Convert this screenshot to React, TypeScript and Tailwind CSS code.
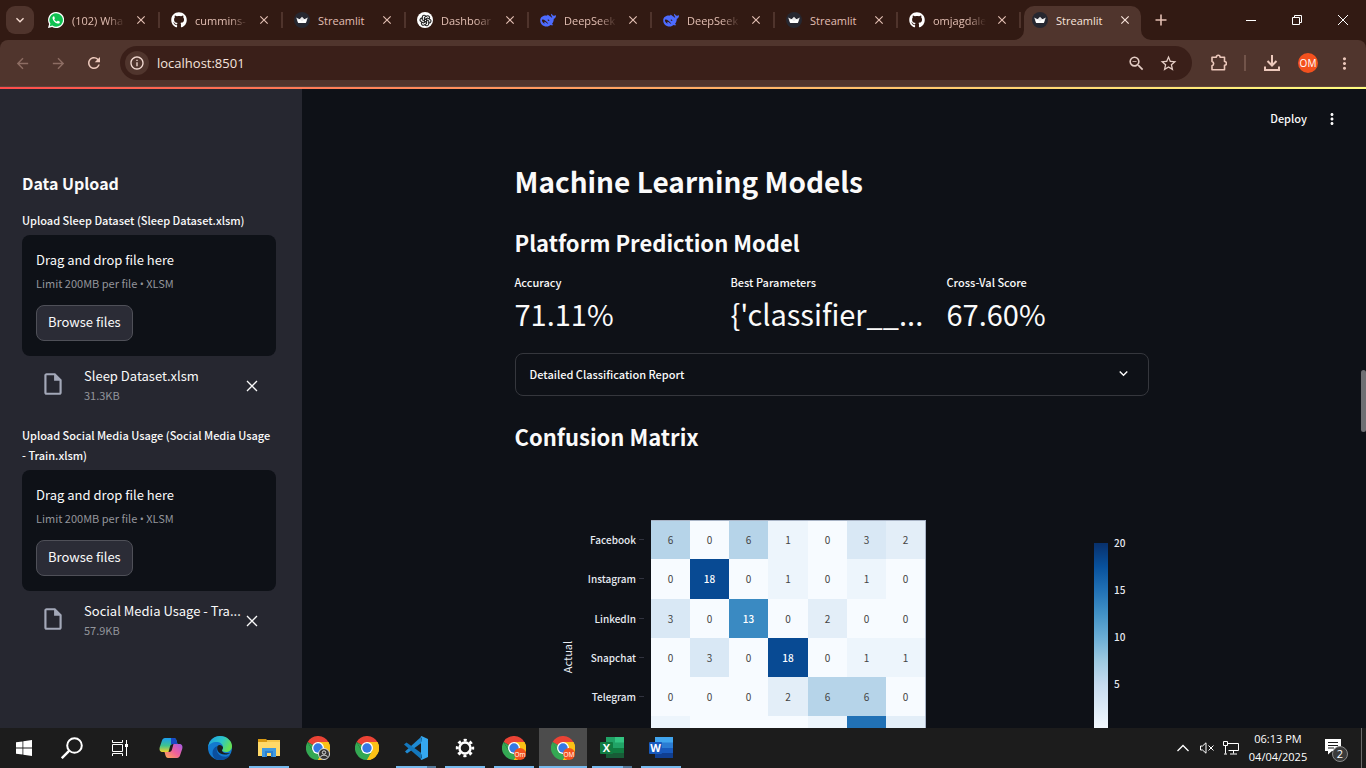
import React from "react";
import { FaGithub } from "react-icons/fa";
import { TbBrandOpenai } from "react-icons/tb";
import {
  MdArrowBack,
  MdArrowForward,
  MdClose,
  MdInfoOutline,
  MdKeyboardArrowDown,
  MdMoreVert,
  MdOutlineInsertDriveFile,
  MdRefresh,
  MdStarOutline,
  MdZoomOut,
} from "react-icons/md";

const WhatsAppIcon = () => (
  <svg viewBox="0 0 16 16" className="size-4">
    <path d="M8 0a8 8 0 0 0-6.9 12L0 16l4.1-1.1A8 8 0 1 0 8 0z" fill="#fff" />
    <path d="M8 1.3a6.7 6.7 0 0 0-5.6 10.3l-.6 2.6 2.6-.7A6.7 6.7 0 1 0 8 1.300z" fill="#10c152" />
    <path
      d="M5.600 4.200c-.9.4-1.200 1.300-1 2.200.5 2.400 2.600 4.500 5 5.100.9.2 1.900-.1 2.200-1.100.1-.5 0-.7-.3-.9l-1.400-.7c-.3-.1-.5 0-.7.200l-.6.7C7.500 9.200 6.700 8.400 6.200 7.300l.6-.7c.1-.2.1-.4 0-.6l-.6-1.500c-.1-.3-.3-.4-.6-.3z"
      fill="#fff"
    />
  </svg>
);

const CrownIcon = () => (
  <svg viewBox="0 0 16 16" className="size-4">
    <circle cx="8" cy="8" r="8" fill="#262730" />
    <path d="M2.200 5.600 5.600 7.200 8 4.700l2.400 2.500 3.400-1.600-1.700 4.900c-.1.300-.3.500-.6.500h-7c-.3 0-.5-.2-.6-.5z" fill="#e8e8ea" />
    <path d="M3.600 8.300 5.600 7.200 8 9.500l2.400-2.300 2 1.100-.5 2.200c-.1.300-.3.500-.6.500H4.700c-.3 0-.5-.2-.6-.5z" fill="#fff" />
  </svg>
);

const WhaleIcon = () => (
  <svg viewBox="0 0 16 16" className="size-4" fill="#4d6bfe">
    <path
      fillRule="evenodd"
      d="M15.700 3.200c-.4-.2-.8.400-1.500.5-.9.100-1.500-.2-1.900-.9-.2-.4-.5-.9-.9-1-.3 0-.3.400-.3.900 0 .9.400 1.500.9 2 .3.300.2.700 0 1-.3-.2-1.200-.7-1.700-1.100C9.400 3.700 8.500 2.900 7.400 2.700c-.4 0-.5.300-.2.600.2.200.2.400-.1.400C3.900 3.200.3 4.700.2 8.300c-.1 3.300 2.600 6.300 6.500 6.300 1.700 0 2.900-.6 3.900-1.500.8.300 2.300.4 2.600 0 .2-.4-.9-.9-1.200-1.100 1.300-1.600 1.700-3.300 1.800-5.200 1.100-.4 2.200-1.500 2.200-3.100 0-.2-.1-.4-.3-.5zM7.900 11.800C6 10.300 5 9.600 4.600 9.700c-.6 0-.3.800-.1 1.300.2.400.1.700-.4.500C2.800 10.900 1.900 9.200 1.900 8c0-.4.200-.6.500-.6 2.500.1 3.600 1.600 5.600 3.900.3.300.2.600-.1.500zM9 9c-.8-.1-1.300-.5-1.300-1 0-.4.300-.5.700-.4.600.1 1 .6 1 1 0 .3-.2.400-.4.400z"
    />
  </svg>
);

const OpenAIIcon = () => (
  <span className="flex size-4 items-center justify-center rounded-full bg-white text-[#222]">
    <TbBrandOpenai size={13} />
  </span>
);

const GithubIcon = () => <FaGithub size={16} color="#fff" />;

const tabs = [
  { title: "(102) Wha", icon: WhatsAppIcon },
  { title: "cummins-", icon: GithubIcon },
  { title: "Streamlit", icon: CrownIcon },
  { title: "Dashboar", icon: OpenAIIcon },
  { title: "DeepSeek", icon: WhaleIcon },
  { title: "DeepSeek", icon: WhaleIcon },
  { title: "Streamlit", icon: CrownIcon },
  { title: "omjagdale", icon: GithubIcon },
  { title: "Streamlit", icon: CrownIcon, active: true },
];

function Tab({ title, icon: Icon, active }: { title: string; icon: React.FC; active?: boolean }) {
  return (
    <div className={active ? "w-[123px] shrink px-[3px]" : "w-[123px] shrink"}>
      <div
        className={
          active
            ? "relative flex h-[34px] items-center rounded-t-[10px] bg-[#50352d] pr-2 pb-[6px] pl-2 text-[#f9e4dc]"
            : "flex h-[34px] items-center pl-[11px] pb-[6px] text-[#e3bfb3]"
        }
      >
        {active && (
          <>
            <svg viewBox="0 0 10 10" className="absolute bottom-0 -left-[10px] size-[10px]" fill="#50352d">
              <path d="M10 0v10H0A10 10 0 0 0 10 0z" />
            </svg>
            <svg viewBox="0 0 10 10" className="absolute -right-[10px] bottom-0 size-[10px]" fill="#50352d">
              <path d="M0 0v10h10A10 10 0 0 1 0 0z" />
            </svg>
          </>
        )}
        <span className="shrink-0">
          <Icon />
        </span>
        <span
          data-full={title === "Streamlit"}
          className="ml-2 min-w-0 flex-1 overflow-hidden [mask-image:linear-gradient(90deg,#000_65%,transparent)] pt-px text-[11px] leading-4 whitespace-nowrap data-[full=true]:[mask-image:none]"
        >
          {title}
        </span>
        <button aria-label={"Close " + title} className="ml-2 flex size-4 shrink-0 items-center justify-center">
          <MdClose size={14} />
        </button>
        {!active && <span className="ml-[9px] h-4 w-[2px] shrink-0 bg-[#4f342c]" />}
      </div>
    </div>
  );
}

function TabStrip() {
  return (
    <div className="flex h-10 items-start bg-[#321a13] pt-[6px] pl-[6px]">
      <button aria-label="Search tabs" className="flex size-7 shrink-0 items-center justify-center rounded-[9px] bg-[#4f342c] text-[#f6dcd2]">
        <MdKeyboardArrowDown size={16} />
      </button>
      <div className="ml-[3px] flex min-w-0">
        {tabs.map((t, i) => (
          <Tab key={i} {...t} />
        ))}
      </div>
      <button aria-label="New tab" className="ml-[3px] flex size-7 shrink-0 items-center justify-center text-[#e3bfb3]">
        <svg viewBox="0 0 12 12" className="size-3" stroke="currentColor" strokeWidth="1.600">
          <path d="M6 .5v11M.5 6h11" />
        </svg>
      </button>
      <div className="ml-auto flex h-7 text-white">
        <button aria-label="Minimize" className="flex w-[46px] items-center justify-center">
          <svg viewBox="0 0 10 10" className="size-[10px]" stroke="currentColor">
            <path d="M0 5.500h10" />
          </svg>
        </button>
        <button aria-label="Restore" className="flex w-[46px] items-center justify-center">
          <svg viewBox="0 0 10 10" className="size-[10px]" stroke="currentColor" fill="none">
            <path d="M.5 2.500h7v7h-7zM2.500 2.500v-2h7v7h-2" />
          </svg>
        </button>
        <button aria-label="Close window" className="flex w-[46px] items-center justify-center">
          <svg viewBox="0 0 10 10" className="size-[10px]" stroke="currentColor">
            <path d="M0 0l10 10M10 0L0 10" />
          </svg>
        </button>
      </div>
    </div>
  );
}

function Toolbar() {
  const btn = "flex h-8 w-9 shrink-0 items-center justify-center";
  return (
    <div className="bg-[#321a13]">
      <div className="flex h-[47px] items-center rounded-t-lg border-b border-[#5d433b] bg-[#50352d] px-1 text-[#ecc8bb]">
        <button aria-label="Back" className={btn + " text-[#8d6d63]"}>
          <MdArrowBack size={17} />
        </button>
        <button aria-label="Forward" className={btn + " text-[#8d6d63]"}>
          <MdArrowForward size={17} />
        </button>
        <button aria-label="Reload" className={btn}>
          <MdRefresh size={18} />
        </button>
        <div className="ml-2 flex h-[34px] min-w-0 flex-1 items-center rounded-full bg-[#3a1f19] pr-[6px] pl-[5px]">
          <button aria-label="Site information" className="flex size-6 shrink-0 items-center justify-center rounded-full bg-[#50352d] text-[#f3dbd3]">
            <MdInfoOutline size={16} />
          </button>
          <input
            aria-label="Address"
            defaultValue="localhost:8501"
            className="ml-2 min-w-0 flex-1 bg-transparent text-[13px] leading-5 text-[#f5e4de] outline-none"
          />
          <button aria-label="Zoom" className="flex h-8 w-7 items-center justify-center text-[#e4cdc5]">
            <MdZoomOut size={19} />
          </button>
          <button aria-label="Bookmark" className="flex size-9 items-center justify-center text-[#e4cdc5]">
            <MdStarOutline size={19} />
          </button>
        </div>
        <button aria-label="Extensions" className={btn + " ml-2"}>
          <svg viewBox="-1 0 18 18" className="size-[18px]" fill="none" stroke="currentColor" strokeWidth="1.600">
            <path d="M2 3.200h4.300a1.900 1.900 0 0 1 3.800 0h4.400v4.300a1.900 1.900 0 0 1 0 3.800v4.500H2v-4a2.300 2.300 0 0 0 0-4.400z" strokeLinejoin="round" />
          </svg>
        </button>
        <span className="mx-2 h-4 w-[2px] bg-[#72544a]" />
        <button aria-label="Downloads" className={btn}>
          <svg viewBox="0 0 18 18" className="size-[18px]" fill="none" stroke="currentColor" strokeWidth="2">
            <path d="M9 1v10M4.500 7 9 11.500 13.500 7M2 12.500V16h14v-3.500" />
          </svg>
        </button>
        <button aria-label="Profile" className={btn}>
          <span className="flex size-5 items-center justify-center rounded-full bg-[#f4511e] text-[10px] text-white">OM</span>
        </button>
        <button aria-label="Browser menu" className={btn}>
          <MdMoreVert size={19} />
        </button>
      </div>
    </div>
  );
}

function Uploader({ id, label, file, size }: { id: string; label: string; file: string; size: string }) {
  return (
    <section className="flex flex-col">
      <label htmlFor={id} className="text-[11px] leading-5 font-medium">
        {label}
      </label>
      <div className="mt-[5px] flex flex-col items-start rounded-lg bg-[#0e1117] p-[14px]">
        <span className="text-[13px] leading-[22px]">Drag and drop file here</span>
        <span className="mt-[2px] text-[11px] leading-5 text-[#93959b]">
          Limit 200MB per file <span className="font-['Open_Sans',sans-serif] leading-none">•</span> XLSM
        </span>
        <button id={id} className="mt-3 h-9 rounded-lg border border-[#4f5058] bg-[#2b2c36] px-[11px] pb-[2px] text-[13px] leading-5">
          Browse files
        </button>
        <span className="h-px" />
      </div>
      <div className="mt-[10px] flex items-center pr-4 pl-[21px]">
        <MdOutlineInsertDriveFile size={26} className="-mt-1 -ml-[3px] shrink-0 text-[#a3a8b8]" />
        <div className="ml-[18px] min-w-0 flex-1 whitespace-nowrap">
          <div className="text-[13px] leading-[19px]">{file}</div>
          <div className="text-[11px] leading-5 text-[#93959b]">{size}</div>
        </div>
        <button aria-label={"Remove " + file} className="flex w-4 shrink-0 justify-center">
          <svg viewBox="0 0 12 12" className="size-3" stroke="currentColor" strokeWidth="1.300">
            <path d="M1 1l10 10M11 1L1 11" />
          </svg>
        </button>
      </div>
    </section>
  );
}

const rows: { name?: string; values: number[] }[] = [
  { name: "Facebook", values: [6, 0, 6, 1, 0, 3, 2] },
  { name: "Instagram", values: [0, 18, 0, 1, 0, 1, 0] },
  { name: "LinkedIn", values: [3, 0, 13, 0, 2, 0, 0] },
  { name: "Snapchat", values: [0, 3, 0, 18, 0, 1, 1] },
  { name: "Telegram", values: [0, 0, 0, 2, 6, 6, 0] },
  { values: [1, 0, 0, 0, 1, 15, 2] },
];

const shades: Record<number, string> = {
  0: "#f7fbff",
  1: "#edf5fc",
  2: "#e3eef8",
  3: "#d9e8f5",
  6: "#b6d4e9",
  13: "#3a8ac2",
  15: "#2171b5",
  18: "#084a93",
};

const xs = [136, 175, 214, 253, 293, 332, 371, 410];
const ys = [66, 105, 145, 184, 223, 262, 301];
const blues = ["#08306b", "#08519c", "#2171b5", "#4292c6", "#6baed6", "#9ecae1", "#c6dbef", "#deebf7", "#f7fbff"];

function ConfusionMatrix() {
  return (
    <svg viewBox="0 0 634 310" className="mt-[2px] w-full" role="img" aria-label="Confusion matrix heatmap">
      <defs>
        <linearGradient id="blues" x1="0" y1="0" x2="0" y2="1">
          {blues.map((c, i) => (
            <stop key={c} offset={i / 8} stopColor={c} />
          ))}
        </linearGradient>
      </defs>
      {rows.map((r, y) => (
        <g key={y} fontSize="10">
          {r.name && (
            <text x="121" y={ys[y] + 24} textAnchor="end" fill="#e6eaf1" fontWeight="500">
              {r.name}
            </text>
          )}
          <path d={`M124 ${ys[y] + 19.5}h5`} stroke="#31333f" />
          {r.values.map((v, x) => (
            <g key={x}>
              <rect x={xs[x]} y={ys[y]} width={xs[x + 1] - xs[x]} height={ys[y + 1] - ys[y]} fill={shades[v]} shapeRendering="crispEdges" />
              {r.name && (
                <text x={(xs[x] + xs[x + 1]) / 2} y={ys[y] + 24} textAnchor="middle" fill={v > 10 ? "#fff" : "#444"} fontWeight={v > 10 ? 500 : 400}>
                  {v}
                </text>
              )}
            </g>
          ))}
        </g>
      ))}
      <path d="M136 66.500h274M410.500 66v244" stroke="#a9b4c6" fill="none" />
      <text transform="translate(57 203) rotate(-90)" textAnchor="middle" fontSize="11" fill="#e6eaf1">
        Actual
      </text>
      <rect x="579" y="89" width="14" height="189" fill="url(#blues)" />
      <g fontSize="10" fill="#e6eaf1" fontWeight="500">
        <text x="599" y="93">20</text>
        <text x="599" y="140">15</text>
        <text x="599" y="187">10</text>
        <text x="599" y="234">5</text>
      </g>
    </svg>
  );
}

function Metric({ label, value }: { label: string; value: string }) {
  return (
    <div className="min-w-0 whitespace-nowrap">
      <div className="text-[11px] leading-5 font-medium">{label}</div>
      <div className="text-[29px] leading-[42px]">{value}</div>
    </div>
  );
}

function StreamlitPage() {
  return (
    <div className="flex min-h-0 flex-1 flex-col font-['Noto_Sans_CJK_SC',sans-serif] text-[#fafafa]">
      <div className="h-[2px] shrink-0 bg-linear-to-r from-[#ff4b4b] to-[#fffd80]" />
      <div className="flex min-h-0 flex-1">
        <aside className="w-[302px] shrink-0 overflow-hidden bg-[#262730] pt-[83px] pr-[26px] pl-[22px]">
          <h2 className="mb-4 text-[16px] leading-[22px] font-bold">Data Upload</h2>
          <div className="flex flex-col gap-5">
            <Uploader id="sleep" label="Upload Sleep Dataset (Sleep Dataset.xlsm)" file="Sleep Dataset.xlsm" size="31.3KB" />
            <Uploader id="social" label={"Upload Social Media Usage (Social Media Usage -\u00a0Train.xlsm)"} file="Social Media Usage - Tra..." size="57.9KB" />
          </div>
        </aside>
        <main className="relative min-w-0 flex-1 overflow-hidden bg-[#0e1117] pr-[5px]">
          <header className="flex h-[60px] items-center justify-end gap-4 pr-5">
            <button className="pb-[2px] text-[11px] leading-5 font-medium">Deploy</button>
            <button aria-label="Main menu">
              <MdMoreVert size={18} />
            </button>
          </header>
          <div className="mx-auto mt-3 max-w-[634px]">
            <h1 className="text-[28px] leading-10 font-bold">Machine Learning Models</h1>
            <h2 className="mt-[25px] text-[22px] leading-8 font-bold">Platform Prediction Model</h2>
            <div className="mt-[14px] grid grid-cols-3 gap-[14px]">
              <Metric label="Accuracy" value="71.11%" />
              <Metric label="Best Parameters" value="{'classifier__..." />
              <Metric label="Cross-Val Score" value="67.60%" />
            </div>
            <button className="mt-[19px] flex h-[43px] w-full items-center justify-between rounded-lg border border-[#35373d] pr-4 pb-[2px] pl-[14px] text-[11px] leading-5 font-medium">
              Detailed Classification Report
              <MdKeyboardArrowDown size={17} />
            </button>
            <h2 className="mt-6 text-[22px] leading-8 font-bold">Confusion Matrix</h2>
            <ConfusionMatrix />
          </div>
          <span className="absolute top-[281px] right-0 h-[62px] w-[5px] rounded-full bg-[#6e6f73]" />
        </main>
      </div>
    </div>
  );
}

const ChromeIcon = ({ badge }: { badge?: string }) => (
  <svg viewBox="0 0 24 24" className="size-6">
    <path d="M12 12 1.600 6A12 12 0 0 1 22.400 6z" fill="#ea4335" />
    <path d="M12 12V6h10.400A12 12 0 0 1 12 24z" fill="#fbc116" />
    <path d="M1.600 6A12 12 0 0 0 12 24l5.200-9L12 12 6.800 15z" fill="#34a853" />
    <path d="M1.600 6 6.800 15 12 12z" fill="#34a853" />
    <path d="M12 6h10.400A12 12 0 0 1 12 24l5.200-9z" fill="#fbc116" />
    <circle cx="12" cy="12" r="6" fill="#fff" />
    <circle cx="12" cy="12" r="4.700" fill="#3578e5" />
    {badge === "user" && (
      <g stroke="#ddd" fill="#333">
        <circle cx="18" cy="18" r="5.500" />
        <circle cx="18" cy="16.500" r="1.700" />
        <path d="M14.500 21c1-2.500 6-2.500 7 0" fill="none" />
      </g>
    )}
    {badge && badge !== "user" && (
      <>
        <circle cx="18" cy="18" r="6" fill="#f4511e" />
        <text x="18" y="20.500" fontSize="6.500" textAnchor="middle" fill="#fff">
          {badge}
        </text>
      </>
    )}
  </svg>
);

const CopilotIcon = () => (
  <svg viewBox="0 0 24 24" className="size-6">
    <defs>
      <linearGradient id="cpA" x1="0" y1="0" x2="0" y2="1">
        <stop offset="0" stopColor="#1b9ef0" />
        <stop offset=".55" stopColor="#3fc38d" />
        <stop offset="1" stopColor="#f0d22c" />
      </linearGradient>
      <linearGradient id="cpB" x1="1" y1="0" x2="0" y2="1">
        <stop offset="0" stopColor="#a25be8" />
        <stop offset=".5" stopColor="#f0609a" />
        <stop offset="1" stopColor="#ffae50" />
      </linearGradient>
    </defs>
    <path d="M6 2h9c1.500 0 2 1 2.500 2.500L18.500 8H14c-2 0-2.500 1-3 2.500L9.500 16H4c-3 0-4-2-3.200-5L3 4.500C3.500 3 4.500 2 6 2z" fill="url(#cpA)" />
    <path d="M12 2h3c1.500 0 2 1 2.500 2.500L18.500 8H14c-1 0-1.500.3-2 1z" fill="#1749c5" />
    <path d="M18 22H9c-1.500 0-2-1-2.500-2.500L5.500 16H10c2 0 2.500-1 3-2.500L14.500 8H20c3 0 4 2 3.200 5L21 19.500c-.5 1.500-1.500 2.500-3 2.500z" fill="url(#cpB)" />
  </svg>
);

const EdgeIcon = () => (
  <svg viewBox="0 0 24 24" className="size-6">
    <defs>
      <linearGradient id="edA" x1="0" y1="0" x2="1" y2=".4">
        <stop offset="0" stopColor="#1f9de0" />
        <stop offset=".6" stopColor="#2cc6c8" />
        <stop offset="1" stopColor="#65df56" />
      </linearGradient>
    </defs>
    <circle cx="12" cy="12" r="12" fill="#1379cf" />
    <path d="M.1 11C1 4.500 6 0 12 0c7 0 12 5 12 10 0 4-3 6-6 6-2.500 0-4-.8-4-1.700 0-.7 1-1 1-3C15 8 12 6 8.500 6 4.500 6 1 8 .1 11z" fill="url(#edA)" />
    <path d="M8.500 23.500C3 21 3 12 9.500 10c-2 4 0 9.500 6 10.500 3 .5 5.500-.5 7-1.500-3 4.500-9 6-14 4.500z" fill="#0b4f9e" />
    <path d="M9.500 10c-1.500 4.500 2 8.500 7 8.500 3 0 5-1 5.700-1.300-1 .1-8 1-8.200-2.900 0-.7 1-1 1-3C14.500 9 11 8 9.500 10z" fill="#1b1c1d" />
  </svg>
);

const FolderIcon = () => (
  <svg viewBox="0 0 24 24" className="size-6">
    <path d="M1 3h8l2 2h12v4H1z" fill="#d99a12" />
    <path d="M10 4h13v3H10z" fill="#f5c64a" />
    <path d="M1 6h22v14H1z" fill="#ffd968" />
    <path d="M5 21v-9h14v9h-4v-5H9v5z" fill="#3f9ae0" />
    <path d="M8 21v-6h8v6h-2v-4h-4v4z" fill="#2b81cf" />
  </svg>
);

const CodeIcon = () => (
  <svg viewBox="0 0 24 24" className="size-6">
    <path d="M17.500.5 1 15.500 3 17.500 18 6.500z" fill="#1f8ad2" />
    <path d="M17.500 23.500 0 8.500l2.500-2L18 17.500z" fill="#1478bd" />
    <path d="M17.500 0 24 3v18l-6.500 3-1-1 1.500-1V2L16.500 1z" fill="#35a8f0" />
    <path d="M18 6v12l-1 .500V5.500zM18 1l5.500 2.500v17L18 23z" fill="#35a8f0" />
  </svg>
);

const GearIcon = () => (
  <svg viewBox="0 0 20 20" className="size-5" fill="none" stroke="#fff">
    <circle cx="10" cy="10" r="5.500" strokeWidth="2.500" />
    <circle cx="10" cy="10" r="7.800" strokeWidth="2.800" strokeDasharray="3.060 3.060" strokeDashoffset="1.530" />
  </svg>
);

const OfficeIcon = ({ letter, c }: { letter: string; c: string[] }) => (
  <svg viewBox="0 0 24 24" className="size-6">
    <path d="M6 1h18v6H6z" fill={c[0]} />
    <path d="M6 6.500h18V12H6z" fill={c[1]} />
    <path d="M6 12h18v5.500H6z" fill={c[2]} />
    <path d="M6 17h18v5H6z" fill={c[3]} />
    {letter === "X" && <path d="M6 1h9v11H6z" fill="#21a366" />}
    <rect y="6" width="13" height="12" rx="1" fill={c[4]} />
    <text x="6.500" y="16" fontSize="11" fontWeight="700" textAnchor="middle" fill="#fff">
      {letter}
    </text>
  </svg>
);

const apps: { name: string; icon: React.ReactNode; state?: "open" | "multi" | "active" }[] = [
  { name: "Copilot", icon: <CopilotIcon /> },
  { name: "Edge", icon: <EdgeIcon /> },
  { name: "File Explorer", icon: <FolderIcon />, state: "open" },
  { name: "Chrome guest", icon: <ChromeIcon badge="user" /> },
  { name: "Chrome", icon: <ChromeIcon /> },
  { name: "Visual Studio Code", icon: <CodeIcon />, state: "multi" },
  { name: "Settings", icon: <GearIcon />, state: "open" },
  { name: "Chrome profile 1", icon: <ChromeIcon badge="Om" />, state: "open" },
  { name: "Chrome profile 2", icon: <ChromeIcon badge="OM" />, state: "active" },
  { name: "Excel", icon: <OfficeIcon letter="X" c={["#33c481", "#21a366", "#107c41", "#185c37", "#107c41"]} />, state: "multi" },
  { name: "Word", icon: <OfficeIcon letter="W" c={["#41a5ee", "#2b7cd3", "#185abd", "#103f91", "#185abd"]} />, state: "open" },
];

function Taskbar() {
  const sys = "flex h-10 w-12 items-center justify-center";
  return (
    <footer className="flex h-10 shrink-0 items-center bg-[#1c1c1c] text-white">
      <button aria-label="Start" className={sys}>
        <svg viewBox="0 0 16 16" className="size-4" fill="#fff">
          <path d="M0 2.300 6.500 1.400v6.200H0zM7.300 1.300 16 0v7.600H7.300zM0 8.400h6.500v6.200L0 13.700zM7.300 8.400H16V16l-8.700-1.300z" />
        </svg>
      </button>
      <button aria-label="Search" className={sys}>
        <svg viewBox="0 0 22 22" className="size-[22px]" fill="none" stroke="#fff" strokeWidth="2">
          <circle cx="13.500" cy="8.500" r="7.300" />
          <path d="M8.300 13.700.8 21.200" strokeWidth="2.400" />
        </svg>
      </button>
      <button aria-label="Task view" className={sys}>
        <svg viewBox="0 0 16 16" className="size-4" fill="none" stroke="#fff">
          <path d="M.5 0v2.500h10V0M.5 16v-2.500h10V16M.5 4.500h10v7H.5zM14.500 0v16" />
          <path d="M13 4h3v3h-3z" fill="#fff" stroke="none" />
        </svg>
      </button>
      <div className="ml-[3px] flex gap-px">
        {apps.map((a) => (
          <button
            key={a.name}
            aria-label={a.name}
            className={a.state === "active" ? "flex h-10 w-12 flex-col items-center bg-[#4c4c4c]" : "flex h-10 w-12 flex-col items-center"}
          >
            <span className="flex h-[38px] items-center pt-[2px]">{a.icon}</span>
            {a.state === "open" && <span className="h-[2px] w-10 bg-[#76b9ed]" />}
            {a.state === "active" && <span className="h-[2px] w-12 bg-[#76b9ed]" />}
            {a.state === "multi" && <span className="h-[2px] w-10 border-r-[9px] border-[#54799a] bg-[#76b9ed]" />}
          </button>
        ))}
      </div>
      <div className="ml-auto flex h-10 items-center">
        <button aria-label="Show hidden icons" className="flex w-6 justify-center">
          <svg viewBox="0 0 12 12" className="size-3" fill="none" stroke="#fff" strokeWidth="1.300">
            <path d="M.5 9 6 3.500 11.500 9" />
          </svg>
        </button>
        <button aria-label="Volume muted" className="flex w-6 justify-center">
          <svg viewBox="0 0 14 12" className="h-3 w-[14px]" fill="none" stroke="#fff">
            <path d="M.5 4h2L6 .8v10.400L2.500 8h-2zM8.500 3.500l5 5M13.500 3.500l-5 5" />
          </svg>
        </button>
        <button aria-label="Network" className="flex w-6 justify-center">
          <svg viewBox="0 0 16 14" className="h-[14px] w-4" fill="none" stroke="#fff">
            <path d="M4.500 2.500h11v7h-10M.5.500h4v4h-4zM2.500 4.500v8M10.500 9.500v3M7 13h7M1 13h3" />
          </svg>
        </button>
        <div className="ml-1 w-[62px] text-center text-[11px] leading-[18px]">
          <div>06:13 PM</div>
          <div>04/04/2025</div>
        </div>
        <button aria-label="Notifications" className="ml-[9px] flex w-9 items-center justify-center pt-[2px]">
          <svg viewBox="0 0 26 26" className="size-[26px]">
            <path d="M2 3h16v12h-9l-4 3.500V15H2z" fill="#fff" />
            <path d="M5 6.500h10M5 9.500h10M5 12h6" stroke="#1c1c1c" />
            <circle cx="17" cy="18" r="7.500" fill="#3a3a3a" stroke="#8a8a8a" />
            <text x="17" y="22" fontSize="11" textAnchor="middle" fill="#fff">
              2
            </text>
          </svg>
        </button>
        <span className="ml-[7px] h-10 w-[5px] border-l border-[#6b6b6b]" />
      </div>
    </footer>
  );
}

export default function App() {
  return (
    <div className="flex h-screen flex-col overflow-hidden bg-[#0e1117] font-['Open_Sans',sans-serif]">
      <TabStrip />
      <Toolbar />
      <StreamlitPage />
      <Taskbar />
    </div>
  );
}
